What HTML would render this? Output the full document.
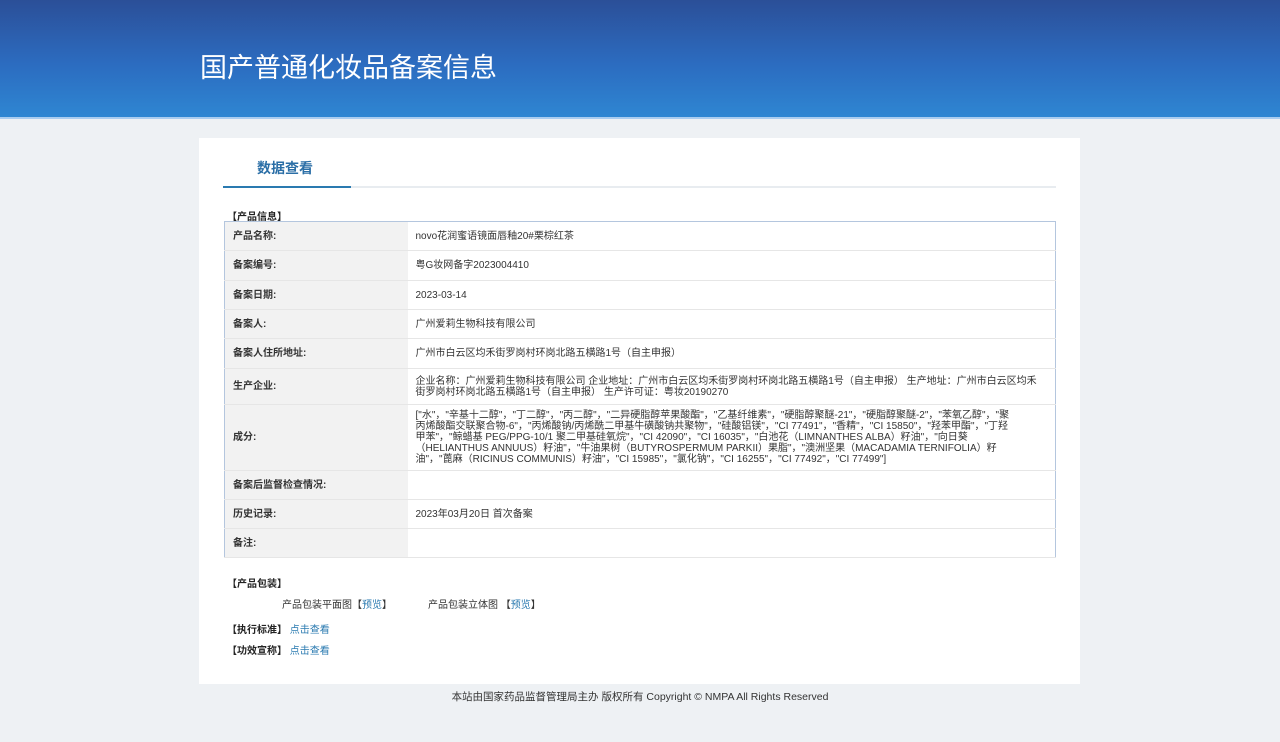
<!DOCTYPE html>
<html><head><meta charset="utf-8"><style>
*{margin:0;padding:0;box-sizing:border-box}
body{width:1280px;height:742px;background:#eef1f4;font-family:"Liberation Sans","Noto Sans CJK SC",sans-serif;color:#333;position:relative;overflow:hidden}
.hd{position:absolute;left:0;top:0;width:1280px;height:117px;background:linear-gradient(180deg,#2b4f98 0%,#2c6cc0 55%,#2e86d2 100%)}
.hd h1{position:absolute;left:200px;top:46px;font-size:27px;font-weight:normal;color:#fff;letter-spacing:0}
.hl{position:absolute;left:0;top:117px;width:1280px;height:2px;background:#a9cdf0}
.card{position:absolute;left:199px;top:138px;width:881px;height:546px;background:#fff}
.tab{position:absolute;left:58px;top:20px;font-size:14px;font-weight:bold;color:#2a6ea6}
.ul{position:absolute;left:24px;top:48px;width:833px;height:2px;background:#e8ecf0}
.ul2{position:absolute;left:24px;top:48px;width:128px;height:2px;background:#2a7ab0}
.sec{position:absolute;font-size:10px;font-weight:bold;color:#222}
table{position:absolute;left:25px;top:83px;width:832px;border-collapse:collapse;border:1px solid #b4c6de;font-size:10px}
td{border-bottom:1px solid #e6e6e6;padding:0 8px;vertical-align:middle;line-height:11px}
td.l{width:183px;background:#f2f2f2;font-weight:bold;color:#333}
.lk{color:#2a7ab0}
.ft{position:absolute;left:0;top:689px;width:1280px;text-align:center;font-size:10.5px;color:#333}
.t{position:absolute;font-size:10px}
</style></head><body>
<div class="hd"><h1>国产普通化妆品备案信息</h1></div>
<div class="hl"></div>
<div class="card">
<div class="tab">数据查看</div>
<div class="ul"></div><div class="ul2"></div>
<div class="sec" style="left:28px;top:70px">【产品信息】</div>
<table>
<tr style="height:29px"><td class="l">产品名称:</td><td>novo花润蜜语镜面唇釉20#栗棕红茶</td></tr>
<tr style="height:30px"><td class="l">备案编号:</td><td>粤G妆网备字2023004410</td></tr>
<tr style="height:29px"><td class="l">备案日期:</td><td>2023-03-14</td></tr>
<tr style="height:29px"><td class="l">备案人:</td><td>广州爱莉生物科技有限公司</td></tr>
<tr style="height:30px"><td class="l">备案人住所地址:</td><td>广州市白云区均禾街罗岗村环岗北路五横路1号（自主申报）</td></tr>
<tr style="height:36px"><td class="l">生产企业:</td><td style="padding-right:12px">企业名称：广州爱莉生物科技有限公司 企业地址：广州市白云区均禾街罗岗村环岗北路五横路1号（自主申报） 生产地址：广州市白云区均禾街罗岗村环岗北路五横路1号（自主申报） 生产许可证：粤妆20190270</td></tr>
<tr style="height:66px"><td class="l">成分:</td><td style="padding-right:40px">["水"，"辛基十二醇"，"丁二醇"，"丙二醇"，"二异硬脂醇苹果酸酯"，"乙基纤维素"，"硬脂醇聚醚-21"，"硬脂醇聚醚-2"，"苯氧乙醇"，"聚丙烯酸酯交联聚合物-6"，"丙烯酸钠/丙烯酰二甲基牛磺酸钠共聚物"，"硅酸铝镁"，"CI 77491"，"香精"，"CI 15850"，"羟苯甲酯"，"丁羟甲苯"，"鲸蜡基 PEG/PPG-10/1 聚二甲基硅氧烷"，"CI 42090"，"CI 16035"，"白池花（LIMNANTHES ALBA）籽油"，"向日葵（HELIANTHUS ANNUUS）籽油"，"牛油果树（BUTYROSPERMUM PARKII）果脂"，"澳洲坚果（MACADAMIA TERNIFOLIA）籽油"，"蓖麻（RICINUS COMMUNIS）籽油"，"CI 15985"，"氯化钠"，"CI 16255"，"CI 77492"，"CI 77499"]</td></tr>
<tr style="height:29px"><td class="l">备案后监督检查情况:</td><td></td></tr>
<tr style="height:29px"><td class="l">历史记录:</td><td>2023年03月20日 首次备案</td></tr>
<tr style="height:29px"><td class="l">备注:</td><td></td></tr>
</table>
<div class="sec" style="left:28px;top:437px">【产品包装】</div>
<div class="t" style="left:83px;top:458px">产品包装平面图【<span class="lk">预览</span>】</div>
<div class="t" style="left:229px;top:458px">产品包装立体图 【<span class="lk">预览</span>】</div>
<div class="sec" style="left:28px;top:483px">【执行标准】 <span class="lk" style="font-weight:normal">点击查看</span></div>
<div class="sec" style="left:28px;top:504px">【功效宣称】 <span class="lk" style="font-weight:normal">点击查看</span></div>
</div>
<div class="ft">本站由国家药品监督管理局主办 版权所有 Copyright © NMPA All Rights Reserved</div>
</body></html>
